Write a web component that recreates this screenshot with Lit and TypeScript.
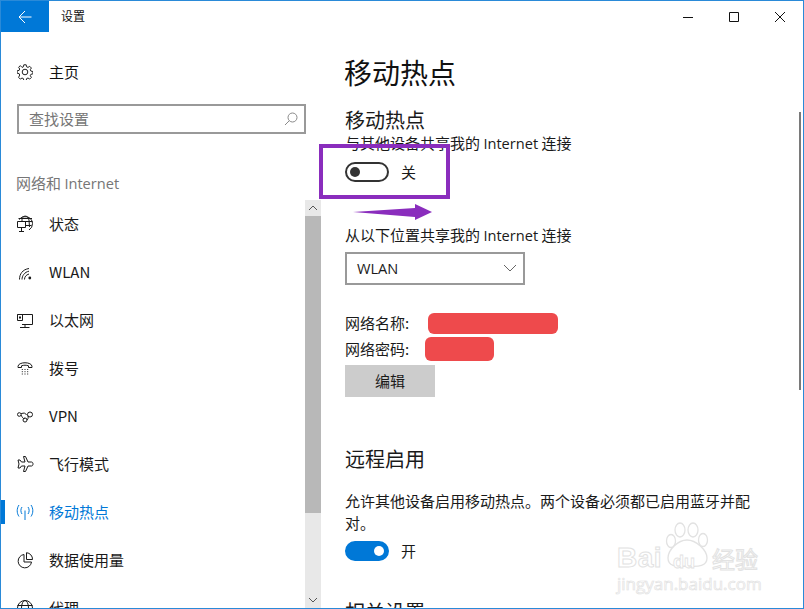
import { LitElement, html, css, svg } from "lit";
import { customElement } from "lit/decorators.js";

const icon = (body: unknown) => html`<svg class="ico" viewBox="0 0 16 16" fill="none" stroke="currentColor" stroke-width="1">${body}</svg>`;

const ICONS: Record<string, unknown> = {
  status: svg`<path d="M2 3.500A7.500 7.500 0 0 1 15.500 7.500 7.500 7.500 0 0 1 12 14M5 5V3C6 -1 11 -1 12 4L12.500 11M1.500 2.500h13.500M8 5.500h7.500M8.500 9.500h6"/><path d="M.5 5.500h8v6h-8zM4.500 11.500v3.500M2 15.500h5"/>`,
  wlan: svg`<path d="M2.500 15.500C2.500 10 5.500 5.500 12 4.500M5 15.500C5 12 7.500 8 12 7.200M7.500 15.500C7.500 13 9 10.800 12 10"/><circle cx="12.800" cy="14" r="1.400" fill="currentColor" stroke="none"/>`,
  ether: svg`<path d="M.5 2.500h15v10H5M8 12.500v3M3 15.500h9.500M.5 2.500h5v6h-5z"/><path d="M2 4.500h2v2H2z" fill="currentColor" stroke="none"/>`,
  dial: svg`<path d="M1 6.500C1 1.500 15 1.500 15 6.500V7.500h-3.500V5.800C9 5 7 5 4.500 5.800V7.500H1z"/><path d="M4.800 9.500h1M7.500 9.500h1M10.200 9.500h1M4.800 11.700h1M7.500 11.700h1M10.200 11.700h1M4.800 14h1M7.500 14h1M10.200 14h1"/>`,
  vpn: svg`<circle cx="2.300" cy="6.500" r="1.800"/><circle cx="13" cy="6.500" r="2.500"/><circle cx="8" cy="12" r="2"/><path d="M4 7C6 11 7 11 8 10M10 12C12 10 11 8 10.700 7.500M4 5.800C7 4.500 8.500 5 9.500 7"/>`,
  plane: svg`<path d="M6.500.5h2L11 6h3.500C16.500 6 16.500 10 14.500 10H11L8.500 15.500h-2L8 10H4.500L3 12H1L2 8 1 4h2L4.500 6H8z"/>`,
  hot: svg`<path d="M8 6.500V16M5 3C3.500 5 3.500 8 5 10M11 3C12.500 5 12.500 8 11 10M2 1C-.4 4.500 -.4 9 2 12.500M14 1C16.400 4.500 16.400 9 14 12.500"/>`,
  data: svg`<path d="M7 2.500A6.700 6.700 0 1 0 14.500 10H7z"/><path d="M9.500.7A6.500 6.500 0 0 1 15.500 7.500H9.500z"/>`,
  proxy: svg`<circle cx="8" cy="8" r="7.500"/><path d="M.5 5.500h15M.5 10.500h15"/><ellipse cx="8" cy="8" rx="3.500" ry="7.500"/>`,
};

const NAV = [
  ["status", "状态"], ["wlan", "WLAN"], ["ether", "以太网"], ["dial", "拨号"], ["vpn", "VPN"],
  ["plane", "飞行模式"], ["hot", "移动热点"], ["data", "数据使用量"], ["proxy", "代理"],
];

@customElement("app-root")
export class AppRoot extends LitElement {
  static styles = css`
    :host {
      display: block; position: relative; width: 804px; height: 609px; box-sizing: border-box;
      overflow: hidden; background: #fff; color: #1a1a1a; border: 1px solid #2a8ad8;
      font: 15px/20px "Noto Sans CJK SC", "Noto Sans", sans-serif;
    }
    .latin { font-family: "Open Sans", "Noto Sans CJK SC", sans-serif; font-size: 14.600px; }
    .titlebar { display: flex; height: 31px; align-items: center; }
    .back { width: 48px; height: 31px; background: #0078d7; color: #fff; display: flex; align-items: center; justify-content: center; }
    .title { margin-left: 12px; padding-bottom: 2px; font-size: 12px; color: #111; }
    .winbtns { margin-left: auto; display: flex; }
    .winbtns span { width: 46px; height: 31px; display: flex; align-items: center; justify-content: center; }
    .main { display: flex; height: 576px; }
    .side { width: 320px; flex: none; display: flex; flex-direction: column; }
    .home { display: flex; align-items: center; height: 20px; margin: 30px 0 0 16px; gap: 16px; color: #111; }
    .home svg { width: 16px; height: 16px; }
    .search {
      margin: 22px 15px 0 16px; height: 30px; box-sizing: border-box; border: 2px solid #999;
      display: flex; align-items: center; justify-content: space-between; padding: 0 6px 0 10px; color: #767676;
    }
    .search svg { width: 14px; height: 14px; color: #8a8a8a; }
    .group { margin: 39px 0 0 15px; color: #767676; height: 20px; }
    .navwrap { display: flex; margin-top: 7px; flex: 1; min-height: 0; }
    .nav { width: 304px; flex: none; overflow: hidden; }
    .row { display: flex; align-items: center; height: 48px; padding-left: 16px; gap: 16px; color: #1a1a1a; position: relative; }
    .row.on { color: #0078d7; }
    .row.on::before { content: ""; position: absolute; left: 0; top: 12px; width: 4px; height: 24px; background: #0078d7; }
    .ico { width: 16px; height: 16px; flex: none; overflow: visible; }
    .bar { width: 16px; flex: none; background: #e8e8e8; display: flex; flex-direction: column; }
    .bar .arrow { height: 16px; display: flex; align-items: center; justify-content: center; color: #555; }
    .bar .thumb { height: 297px; background: #b8b8b8; }
    .bar .fill { flex: 1; }
    .content { flex: 1; padding-left: 24px; position: relative; }
    h1 { margin: 20px 0 0 -1px; font-size: 28px; line-height: 40px; font-weight: 400; color: #111; }
    h2 { margin: 0; font-size: 20px; line-height: 26px; font-weight: 400; color: #1a1a1a; }
    .h2a { margin-top: 15px; }
    .line { height: 20px; white-space: nowrap; }
    .toggleRow { display: flex; align-items: center; gap: 12px; height: 20px; }
    .tg { width: 44px; height: 20px; box-sizing: border-box; border-radius: 10px; border: 2px solid #333; display: flex; align-items: center; padding: 0 3px; }
    .tg i { width: 10px; height: 10px; border-radius: 50%; background: #333; }
    .tg.on { background: #0078d7; border-color: #0078d7; justify-content: flex-end; }
    .tg.on i { background: #fff; }
    .gapS { margin-top: 9px; }
    .gapL { margin-top: 43px; }
    .select {
      margin-top: 7px; padding-bottom: 1px; width: 180px; height: 33px; box-sizing: border-box; border: 2px solid #999;
      display: flex; align-items: center; justify-content: space-between; padding: 0 6px 1px 10px;
    }
    .select svg { width: 14px; height: 14px; color: #666; }
    .kv { display: flex; align-items: center; height: 24px; }
    .kv.first { margin-top: 26px; }
    .kv.next { margin-top: 2px; }
    .kv .k { width: 80px; flex: none; }
    .red { display: block; background: #ee4a4c; border-radius: 6px; }
    .red.name { width: 130px; height: 21px; margin-left: 3px; }
    .red.pass { width: 69px; height: 24px; }
    .btn { margin-top: 4px; width: 90px; height: 32px; background: #ccc; display: flex; align-items: center; justify-content: center; }
    .h2b { margin-top: 49px; }
    .para { width: 410px; line-height: 22px; margin-top: 18px; }
    .gapT { margin-top: 7px; }
    .h2c { margin-top: 38px; }
    .box { position: absolute; left: 318px; top: 143px; width: 131px; height: 55px; box-sizing: border-box; border: 4px solid #8a2dbd; pointer-events: none; }
    .pointer { position: absolute; left: 352px; top: 203px; }
    .mark { position: absolute; left: 615px; top: 520px; width: 175px; height: 85px; pointer-events: none; color: #fff; }
    .mark svg { position: absolute; left: 49px; top: 1px; }
    .mark span { position: absolute; white-space: nowrap; }
    .mark .bd { left: 1px; top: 21px; font: 700 28px/32px "Liberation Sans", sans-serif; letter-spacing: .5px; -webkit-text-stroke: 1px #e2e2e2; }
    .mark .du { left: 57px; top: 30px; font: 700 18px/22px "Liberation Sans", sans-serif; -webkit-text-stroke: .8px #e2e2e2; }
    .mark .jy { left: 96px; top: 22px; font-size: 23px; line-height: 30px; -webkit-text-stroke: 1px #e2e2e2; }
    .mark .url { left: 1px; top: 52px; font: 400 17px/22px "Open Sans", sans-serif; -webkit-text-stroke: .7px #e2e2e2; }
    .vline { position: absolute; left: 798px; top: 111px; width: 2px; height: 278px; background: #7a7a7a; }
  `;

  render() {
    return html`
      <div class="titlebar">
        <div class="back">
          <svg width="14" height="14" viewBox="0 0 14 14" fill="none" stroke="currentColor"><path d="M1 7h12.500M7 1 1 7l6 6"/></svg>
        </div>
        <div class="title">设置</div>
        <div class="winbtns">
          <span><svg width="12" height="12" fill="none" stroke="#111"><path d="M1 6.500h10"/></svg></span>
          <span><svg width="12" height="12" fill="none" stroke="#111"><path d="M1.500 1.500h9v9h-9z"/></svg></span>
          <span><svg width="12" height="12" fill="none" stroke="#111"><path d="M1 1l10 10M11 1 1 11"/></svg></span>
        </div>
      </div>
      <div class="main">
        <div class="side">
          <div class="home">
            <svg viewBox="0 0 16 16" fill="none" stroke="#222"><circle cx="8" cy="8" r="2.800"/><path d="M6.800.8h2.400l.4 2 1.400.6 1.700-1.100 1.700 1.700-1.100 1.700.6 1.400 2 .4v2.400l-2 .4-.6 1.400 1.100 1.700-1.700 1.700-1.700-1.100-1.400.6-.4 2H6.800l-.4-2-1.400-.6-1.700 1.100-1.700-1.700L2.700 11l-.6-1.400-2-.4V6.800l2-.4.6-1.400-1.100-1.700 1.700-1.700L5 3.400l1.400-.6z"/></svg>
            <span>主页</span>
          </div>
          <div class="search">
            <span>查找设置</span>
            <svg viewBox="0 0 14 14" fill="none" stroke="currentColor"><circle cx="8.500" cy="5.500" r="4.500"/><path d="M5.300 8.700 1 13"/></svg>
          </div>
          <div class="group">网络和 <span class="latin">Internet</span></div>
          <div class="navwrap">
            <div class="nav">
              ${NAV.map(([k, t]) => html`<div class="row ${k === "hot" ? "on" : ""}">${icon(ICONS[k])}<span>${t}</span></div>`)}
            </div>
            <div class="bar">
              <div class="arrow"><svg width="10" height="6" fill="none" stroke="currentColor"><path d="M1 5l4-4 4 4"/></svg></div>
              <div class="thumb"></div>
              <div class="fill"></div>
              <div class="arrow"><svg width="10" height="6" fill="none" stroke="currentColor"><path d="M1 1l4 4 4-4"/></svg></div>
            </div>
          </div>
        </div>
        <div class="content">
          <h1>移动热点</h1>
          <h2 class="h2a">移动热点</h2>
          <div class="line">与其他设备共享我的 <span class="latin">Internet</span> 连接</div>
          <div class="toggleRow gapS"><div class="tg"><i></i></div><span>关</span></div>
          <div class="line gapL">从以下位置共享我的 <span class="latin">Internet</span> 连接</div>
          <div class="select"><span class="latin">WLAN</span>
            <svg viewBox="0 0 14 14" fill="none" stroke="currentColor"><path d="M1 4l6 6 6-6"/></svg>
          </div>
          <div class="kv first"><span class="k">网络名称:</span><span class="red name"></span></div>
          <div class="kv next"><span class="k">网络密码:</span><span class="red pass"></span></div>
          <div class="btn">编辑</div>
          <h2 class="h2b">远程启用</h2>
          <div class="para">允许其他设备启用移动热点。两个设备必须都已启用蓝牙并配对。</div>
          <div class="toggleRow gapT"><div class="tg on"><i></i></div><span>开</span></div>
          <h2 class="h2c">相关设置</h2>
        </div>
      </div>
      <div class="vline"></div>
      <div class="box"></div>
      <svg class="pointer" width="80" height="17" viewBox="0 0 80 17"><path d="M0 8 62 4 62 0 79 8 62 16 62 13z" fill="#8a2dbd"/></svg>
      <div class="mark">
        <svg width="46" height="46" viewBox="0 0 46 46" fill="#fff" stroke="#e2e2e2" stroke-width="1.300">
          <ellipse cx="6" cy="19" rx="4.500" ry="6.500"/><ellipse cx="15" cy="8" rx="5" ry="7"/><ellipse cx="28" cy="8" rx="5" ry="7"/><ellipse cx="38" cy="18" rx="4.500" ry="6.500"/>
          <path d="M22 18c9 0 20 10 20 18s-8 9-20 8C10 45 3 44 3 36s10-18 19-18z"/>
        </svg>
        <span class="bd">Bai</span>
        <span class="du">du</span>
        <span class="jy">经验</span>
        <span class="url">jingyan.baidu.com</span>
      </div>
    `;
  }
}
